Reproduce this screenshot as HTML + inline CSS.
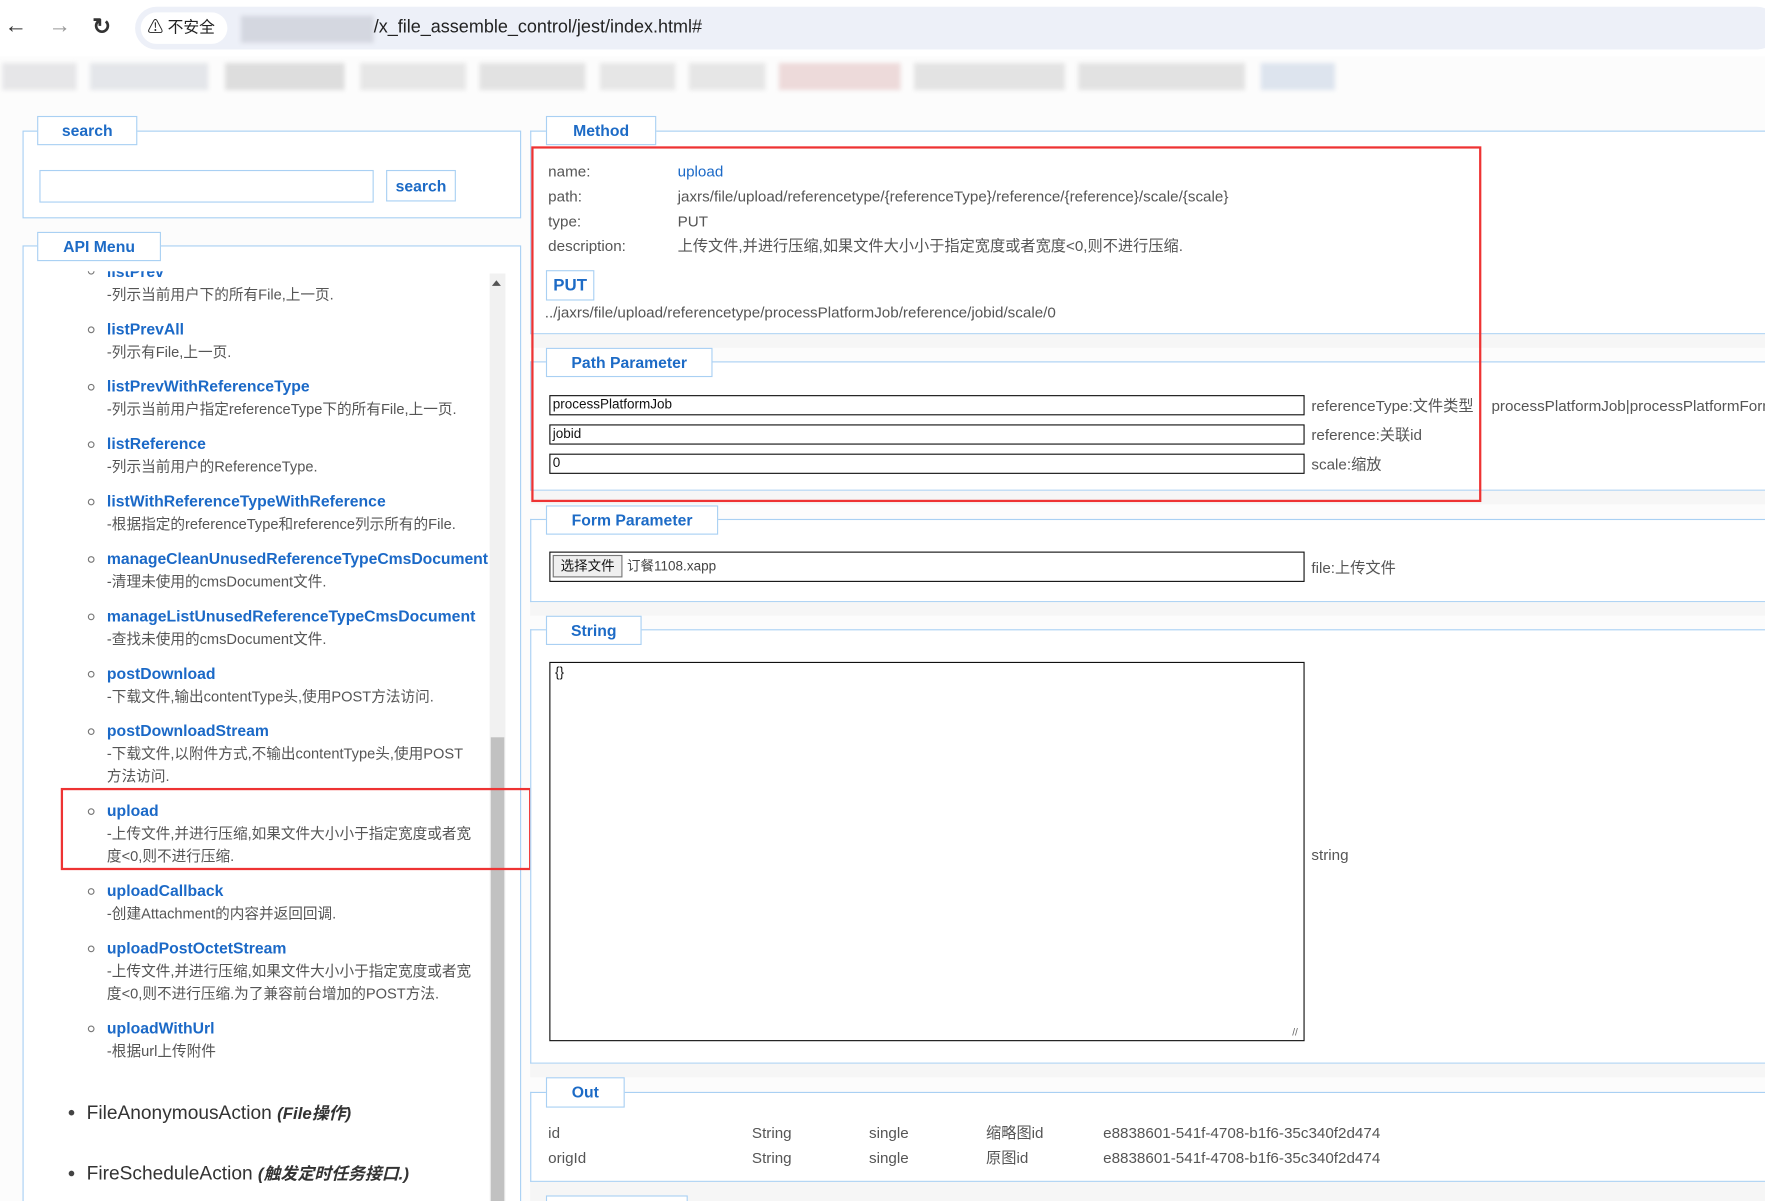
<!DOCTYPE html>
<html><head><meta charset="utf-8">
<style>
*{margin:0;padding:0;box-sizing:border-box}
html,body{width:1765px;height:1201px;overflow:hidden;background:#fff}
#w{position:absolute;left:0;top:0;width:1568px;height:1067px;transform:scale(1.12564);transform-origin:0 0;font-family:"Liberation Sans","Noto Sans CJK SC",sans-serif;background:#fcfcfc;overflow:hidden}
.a{position:absolute;white-space:nowrap}
.lg{position:absolute;border:1px solid #a9d0f3;background:#fff;color:#1d6bc6;font-weight:bold;font-size:14px;text-align:center;line-height:24px}
.nm{position:absolute;left:95px;color:#1b69c7;font-weight:bold;font-size:14px;white-space:nowrap;line-height:17px}
.ds{position:absolute;left:95px;color:#555;font-size:13px;white-space:nowrap;line-height:17px}
.bl{position:absolute;left:78px;width:6px;height:6px;border:1px solid #777;border-radius:50%}
.t{position:absolute;color:#555;font-size:13.5px;white-space:nowrap;line-height:17px}
.inp{position:absolute;left:488px;width:671px;height:18px;border:1.5px solid #111;background:#fff;font-size:12px;line-height:15px;padding-left:2px;color:#111}
.blur{position:absolute;background:#e3e3e3;filter:blur(2px)}
</style></head><body><div id="w">
<div class="a" style="left:0;top:0;width:1568px;height:50px;background:#fff"></div>
<div class="a" style="left:4px;top:12px;font-size:20px;color:#333">&#8592;</div>
<div class="a" style="left:43px;top:12px;font-size:20px;color:#999">&#8594;</div>
<div class="a" style="left:82px;top:11px;font-size:20px;color:#333;font-weight:bold">&#8635;</div>
<div class="a" style="left:120px;top:6px;width:1460px;height:38px;border-radius:19px;background:#edf0f8"></div>
<div class="a" style="left:125px;top:11px;width:77px;height:28px;border-radius:14px;background:#fff"></div>
<div class="a" style="left:131px;top:15px;font-size:14px;color:#222;line-height:18px">&#9888; 不安全</div>
<div class="blur" style="left:214px;top:14px;width:118px;height:24px;background:#d4d7e0"></div>
<div class="a" style="left:332px;top:16px;font-size:16px;color:#222;line-height:18px">/x_file_assemble_control/jest/index.html#</div>
<div class="blur" style="left:2px;top:56px;width:66px;height:24px;background:#e6e6e8"></div>
<div class="blur" style="left:80px;top:56px;width:105px;height:24px;background:#e4e6ea"></div>
<div class="blur" style="left:200px;top:56px;width:106px;height:24px;background:#ddd"></div>
<div class="blur" style="left:320px;top:56px;width:94px;height:24px;background:#e6e6e6"></div>
<div class="blur" style="left:426px;top:56px;width:94px;height:24px;background:#e2e2e2"></div>
<div class="blur" style="left:533px;top:56px;width:67px;height:24px;background:#e6e6e6"></div>
<div class="blur" style="left:612px;top:56px;width:68px;height:24px;background:#e6e6e6"></div>
<div class="blur" style="left:692px;top:56px;width:108px;height:24px;background:#eddada"></div>
<div class="blur" style="left:812px;top:56px;width:134px;height:24px;background:#e3e3e3"></div>
<div class="blur" style="left:958px;top:56px;width:148px;height:24px;background:#e2e2e2"></div>
<div class="blur" style="left:1120px;top:56px;width:66px;height:24px;background:#dde4ee"></div>

<div class="a" style="left:20px;top:116px;width:443px;height:78px;border:1px solid #a9d0f3;background:#fff"></div>
<div class="lg" style="left:33px;top:103px;width:89px;height:26px">search</div>
<div class="a" style="left:35px;top:151px;width:297px;height:29px;border:1px solid #a9d0f3;background:#fff"></div>
<div class="lg" style="left:343px;top:151px;width:62px;height:28px;line-height:26px;font-size:14px">search</div>

<div class="a" style="left:20px;top:218px;width:443px;height:900px;border:1px solid #a9d0f3;background:#fff"></div>
<div class="lg" style="left:33px;top:206px;width:110px;height:26px">API Menu</div>
<div class="a" style="left:435px;top:243px;width:14px;height:830px;background:#f1f1f1"></div>
<div class="a" style="left:436px;top:655px;width:12px;height:420px;background:#c1c1c1"></div>
<div class="a" style="left:437px;top:249px;width:0;height:0;border-left:4px solid transparent;border-right:4px solid transparent;border-bottom:5px solid #555"></div>

<div style="position:absolute;left:0;top:241px;width:433px;height:6px;overflow:hidden"><div class="bl" style="top:-3px"></div><div class="nm" style="top:-8px">listPrev</div></div>
<div class="ds" style="top:253px">-列示当前用户下的所有File,上一页.</div>
<div class="bl" style="top:290px"></div><div class="nm" style="top:284px">listPrevAll</div>
<div class="ds" style="top:304px">-列示有File,上一页.</div>
<div class="bl" style="top:341px"></div><div class="nm" style="top:335px">listPrevWithReferenceType</div>
<div class="ds" style="top:355px">-列示当前用户指定referenceType下的所有File,上一页.</div>
<div class="bl" style="top:392px"></div><div class="nm" style="top:386px">listReference</div>
<div class="ds" style="top:406px">-列示当前用户的ReferenceType.</div>
<div class="bl" style="top:443px"></div><div class="nm" style="top:437px">listWithReferenceTypeWithReference</div>
<div class="ds" style="top:457px">-根据指定的referenceType和reference列示所有的File.</div>
<div class="bl" style="top:494px"></div><div class="nm" style="top:488px;letter-spacing:-0.05px">manageCleanUnusedReferenceTypeCmsDocument</div>
<div class="ds" style="top:508px">-清理未使用的cmsDocument文件.</div>
<div class="bl" style="top:545px"></div><div class="nm" style="top:539px">manageListUnusedReferenceTypeCmsDocument</div>
<div class="ds" style="top:559px">-查找未使用的cmsDocument文件.</div>
<div class="bl" style="top:596px"></div><div class="nm" style="top:590px">postDownload</div>
<div class="ds" style="top:610px">-下载文件,输出contentType头,使用POST方法访问.</div>
<div class="bl" style="top:647px"></div><div class="nm" style="top:641px">postDownloadStream</div>
<div class="ds" style="top:661px">-下载文件,以附件方式,不输出contentType头,使用POST</div>
<div class="ds" style="top:681px">方法访问.</div>
<div class="bl" style="top:718px"></div><div class="nm" style="top:712px">upload</div>
<div class="ds" style="top:732px">-上传文件,并进行压缩,如果文件大小小于指定宽度或者宽</div>
<div class="ds" style="top:752px">度&lt;0,则不进行压缩.</div>
<div class="bl" style="top:789px"></div><div class="nm" style="top:783px">uploadCallback</div>
<div class="ds" style="top:803px">-创建Attachment的内容并返回回调.</div>
<div class="bl" style="top:840px"></div><div class="nm" style="top:834px">uploadPostOctetStream</div>
<div class="ds" style="top:854px">-上传文件,并进行压缩,如果文件大小小于指定宽度或者宽</div>
<div class="ds" style="top:874px">度&lt;0,则不进行压缩.为了兼容前台增加的POST方法.</div>
<div class="bl" style="top:911px"></div><div class="nm" style="top:905px">uploadWithUrl</div>
<div class="ds" style="top:925px">-根据url上传附件</div>
<div class="a" style="left:61px;top:986px;width:5px;height:5px;border-radius:50%;background:#444"></div>
<div class="a" style="left:77px;top:979px;font-size:17px;color:#333;line-height:20px">FileAnonymousAction <i style="font-weight:bold;font-size:15px">(File操作)</i></div>
<div class="a" style="left:61px;top:1040px;width:5px;height:5px;border-radius:50%;background:#444"></div>
<div class="a" style="left:77px;top:1033px;font-size:17px;color:#333;line-height:20px">FireScheduleAction <i style="font-weight:bold;font-size:15px">(触发定时任务接口.)</i></div>
<div class="a" style="left:54px;top:700px;width:418px;height:73px;border:2px solid #ee3333"></div>

<div class="a" style="left:471px;top:116px;width:1100px;height:181px;border:1px solid #a9d0f3;border-right:0;background:#fff"></div>
<div class="lg" style="left:485px;top:103px;width:98px;height:26px">Method</div>
<div class="t" style="left:487px;top:144px">name:</div><div class="a" style="left:602px;top:144px;font-size:13.5px;color:#1b69c7;line-height:17px">upload</div>
<div class="t" style="left:487px;top:166px">path:</div><div class="t" style="left:602px;top:166px">jaxrs/file/upload/referencetype/{referenceType}/reference/{reference}/scale/{scale}</div>
<div class="t" style="left:487px;top:188px">type:</div><div class="t" style="left:602px;top:188px">PUT</div>
<div class="t" style="left:487px;top:210px">description:</div><div class="t" style="left:602px;top:210px">上传文件,并进行压缩,如果文件大小小于指定宽度或者宽度&lt;0,则不进行压缩.</div>
<div class="lg" style="left:485px;top:240px;width:43px;height:27px;font-size:15px;line-height:25px">PUT</div>
<div class="t" style="left:484px;top:269px">../jaxrs/file/upload/referencetype/processPlatformJob/reference/jobid/scale/0</div>

<div class="a" style="left:471px;top:297px;width:1100px;height:12px;background:#f6f6f6"></div>
<div class="a" style="left:471px;top:321px;width:1100px;height:115px;border:1px solid #a9d0f3;border-right:0;background:#fff"></div>
<div class="lg" style="left:485px;top:309px;width:148px;height:26px">Path Parameter</div>
<div class="inp" style="top:351px">processPlatformJob</div>
<div class="inp" style="top:377px">jobid</div>
<div class="inp" style="top:403px">0</div>
<div class="t" style="left:1165px;top:352px">referenceType:文件类型</div>
<div class="t" style="left:1325px;top:352px">processPlatformJob|processPlatformForm</div>
<div class="t" style="left:1165px;top:378px">reference:关联id</div>
<div class="t" style="left:1165px;top:404px">scale:缩放</div>

<div class="a" style="left:471px;top:436px;width:1100px;height:12px;background:#f6f6f6"></div>
<div class="a" style="left:471px;top:461px;width:1100px;height:74px;border:1px solid #a9d0f3;border-right:0;background:#fff"></div>
<div class="lg" style="left:485px;top:449px;width:153px;height:26px">Form Parameter</div>
<div class="inp" style="top:490px;height:27px;padding-left:2px"><span style="display:inline-block;margin-top:2px;border:1px solid #777;background:#efefef;font-size:12px;padding:2px 6px;line-height:14px">选择文件</span><span style="font-size:12px;color:#444;margin-left:4px">订餐1108.xapp</span></div>
<div class="t" style="left:1165px;top:496px">file:上传文件</div>

<div class="a" style="left:471px;top:535px;width:1100px;height:12px;background:#f6f6f6"></div>
<div class="a" style="left:471px;top:559px;width:1100px;height:386px;border:1px solid #a9d0f3;border-right:0;background:#fff"></div>
<div class="lg" style="left:485px;top:547px;width:85px;height:26px">String</div>
<div class="a" style="left:488px;top:588px;width:671px;height:337px;border:1.5px solid #111;background:#fff;font-size:12px;padding:1px 4px;color:#111">{}</div>
<div class="a" style="left:1148px;top:912px;font-size:9px;color:#666">//</div>
<div class="t" style="left:1165px;top:751px">string</div>

<div class="a" style="left:471px;top:945px;width:1100px;height:12px;background:#f6f6f6"></div>
<div class="a" style="left:471px;top:970px;width:1100px;height:80px;border:1px solid #a9d0f3;border-right:0;background:#fff"></div>
<div class="lg" style="left:485px;top:957px;width:70px;height:27px">Out</div>
<div class="t" style="left:487px;top:998px">id</div><div class="t" style="left:668px;top:998px">String</div><div class="t" style="left:772px;top:998px">single</div><div class="t" style="left:876px;top:998px">缩略图id</div><div class="t" style="left:980px;top:998px">e8838601-541f-4708-b1f6-35c340f2d474</div>
<div class="t" style="left:487px;top:1020px">origId</div><div class="t" style="left:668px;top:1020px">String</div><div class="t" style="left:772px;top:1020px">single</div><div class="t" style="left:876px;top:1020px">原图id</div><div class="t" style="left:980px;top:1020px">e8838601-541f-4708-b1f6-35c340f2d474</div>
<div class="a" style="left:471px;top:1050px;width:1100px;height:20px;background:#f6f6f6"></div>
<div class="lg" style="left:485px;top:1062px;width:126px;height:26px"></div>

<div class="a" style="left:472px;top:130px;width:844px;height:316px;border:2px solid #ee3333"></div>
</div></body></html>
